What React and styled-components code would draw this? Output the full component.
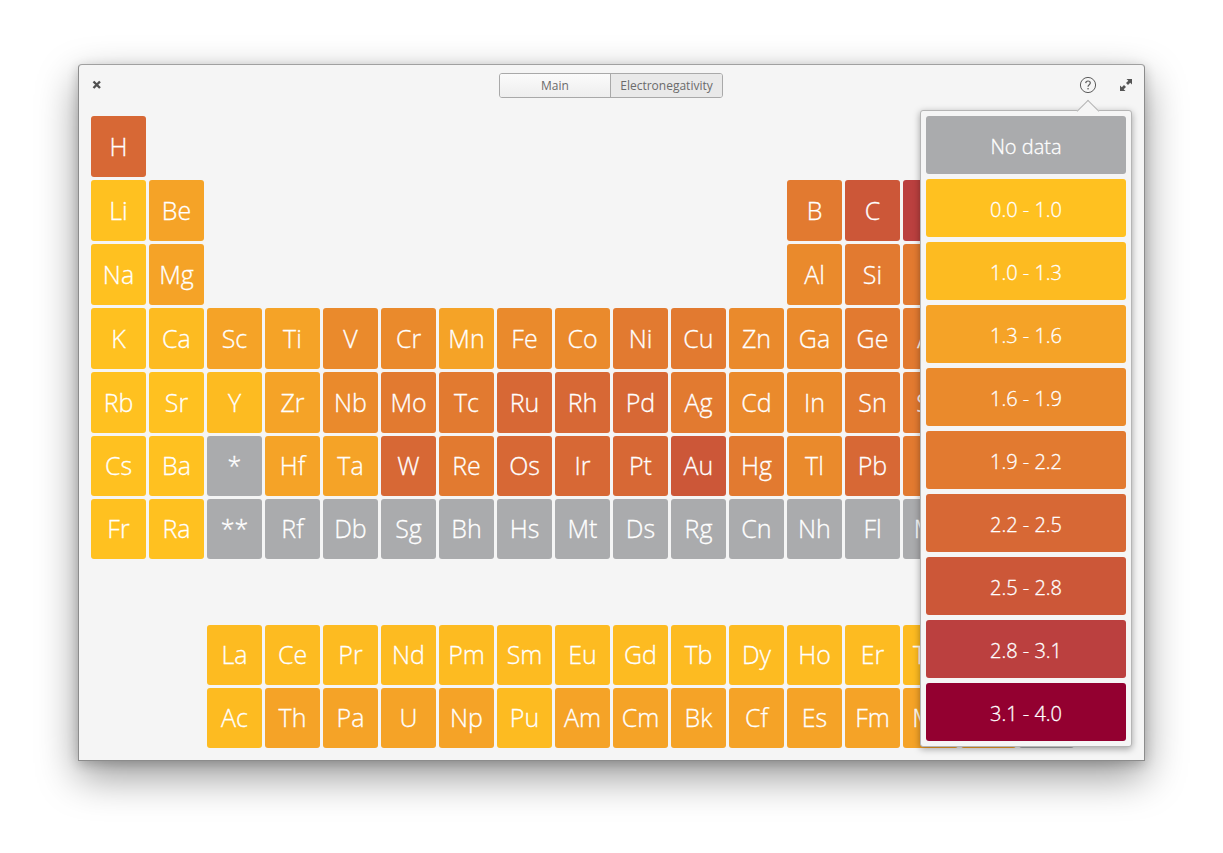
import React from 'react'
import styled, { createGlobalStyle } from 'styled-components'

const BANDS = [
  { label: 'No data', color: '#aaabad' },
  { label: '0.0 - 1.0', color: '#ffc120' },
  { label: '1.0 - 1.3', color: '#fdbb21' },
  { label: '1.3 - 1.6', color: '#f5a327' },
  { label: '1.6 - 1.9', color: '#ea8a2c' },
  { label: '1.9 - 2.2', color: '#e27a30' },
  { label: '2.2 - 2.5', color: '#d76835' },
  { label: '2.5 - 2.8', color: '#cc5738' },
  { label: '2.8 - 3.1', color: '#bb403f' },
  { label: '3.1 - 4.0', color: '#930030' },
]

// [symbol, column, band], row by row; a null row is the empty one
const ROWS = [
  [['H', 1, 6], ['He', 18, 0]],
  [['Li', 1, 1], ['Be', 2, 3], ['B', 13, 5], ['C', 14, 7], ['N', 15, 8], ['O', 16, 9], ['F', 17, 9], ['Ne', 18, 0]],
  [['Na', 1, 1], ['Mg', 2, 3], ['Al', 13, 4], ['Si', 14, 5], ['P', 15, 5], ['S', 16, 7], ['Cl', 17, 9], ['Ar', 18, 0]],
  [['K', 1, 1], ['Ca', 2, 2], ['Sc', 3, 3], ['Ti', 4, 3], ['V', 5, 4], ['Cr', 6, 4], ['Mn', 7, 3], ['Fe', 8, 4], ['Co', 9, 4], ['Ni', 10, 5], ['Cu', 11, 5], ['Zn', 12, 4], ['Ga', 13, 4], ['Ge', 14, 5], ['As', 15, 5], ['Se', 16, 7], ['Br', 17, 8], ['Kr', 18, 8]],
  [['Rb', 1, 1], ['Sr', 2, 1], ['Y', 3, 2], ['Zr', 4, 3], ['Nb', 5, 4], ['Mo', 6, 5], ['Tc', 7, 5], ['Ru', 8, 6], ['Rh', 9, 6], ['Pd', 10, 6], ['Ag', 11, 5], ['Cd', 12, 4], ['In', 13, 4], ['Sn', 14, 5], ['Sb', 15, 5], ['Te', 16, 5], ['I', 17, 7], ['Xe', 18, 7]],
  [['Cs', 1, 1], ['Ba', 2, 1], ['*', 3, 0], ['Hf', 4, 3], ['Ta', 5, 3], ['W', 6, 6], ['Re', 7, 5], ['Os', 8, 6], ['Ir', 9, 6], ['Pt', 10, 6], ['Au', 11, 7], ['Hg', 12, 5], ['Tl', 13, 4], ['Pb', 14, 6], ['Bi', 15, 5], ['Po', 16, 5], ['At', 17, 6], ['Rn', 18, 6]],
  [['Fr', 1, 1], ['Ra', 2, 1], ['**', 3, 0], ['Rf', 4, 0], ['Db', 5, 0], ['Sg', 6, 0], ['Bh', 7, 0], ['Hs', 8, 0], ['Mt', 9, 0], ['Ds', 10, 0], ['Rg', 11, 0], ['Cn', 12, 0], ['Nh', 13, 0], ['Fl', 14, 0], ['Mc', 15, 0], ['Lv', 16, 0], ['Ts', 17, 0], ['Og', 18, 0]],
  null,
  [['La', 3, 2], ['Ce', 4, 2], ['Pr', 5, 2], ['Nd', 6, 2], ['Pm', 7, 2], ['Sm', 8, 2], ['Eu', 9, 2], ['Gd', 10, 2], ['Tb', 11, 2], ['Dy', 12, 2], ['Ho', 13, 2], ['Er', 14, 2], ['Tm', 15, 2], ['Yb', 16, 2], ['Lu', 17, 2]],
  [['Ac', 3, 2], ['Th', 4, 3], ['Pa', 5, 3], ['U', 6, 3], ['Np', 7, 3], ['Pu', 8, 2], ['Am', 9, 3], ['Cm', 10, 3], ['Bk', 11, 3], ['Cf', 12, 3], ['Es', 13, 3], ['Fm', 14, 3], ['Md', 15, 3], ['No', 16, 3], ['Lr', 17, 0]],
]

const GlobalStyle = createGlobalStyle`
  html, body {
    margin: 0;
    background: #fff;
    font-family: "Open Sans", "Noto Sans", sans-serif;
  }
`

const Stage = styled.div`
  width: 1223px;
  height: 853px;
  box-sizing: border-box;
  padding: 64px 0 0 78px;
  overflow: hidden;
`

const Window = styled.div`
  position: relative;
  width: 1067px;
  height: 697px;
  box-sizing: border-box;
  background: #f5f5f5;
  border: 1px solid #8c8c8c;
  border-top-color: #a0a0a0;
  border-radius: 4px 4px 0 0;
  box-shadow: 0 16px 40px rgba(0, 0, 0, 0.4), 0 3px 12px rgba(0, 0, 0, 0.2);
`

const TitleBar = styled.div`
  height: 51px;
  box-sizing: border-box;
  padding: 8px 12px 0;
  display: grid;
  grid-template-columns: 1fr auto 1fr;
  align-items: start;
`

const IconButton = styled.div`
  height: 24px;
  display: flex;
  align-items: center;
  justify-content: center;
  color: #555;
`

const CloseButton = styled(IconButton)`
  justify-self: start;
`

const Actions = styled.div`
  justify-self: end;
  display: flex;
  align-items: center;
  gap: 23px;
`

const Segments = styled.div`
  display: flex;
  width: 224px;
  height: 25px;
  box-sizing: border-box;
  border: 1px solid #a9a9a9;
  border-radius: 3px;
  margin-left: -1px;
  overflow: hidden;
`

const Segment = styled.div`
  flex: ${p => (p.$active ? '1' : '0 0 110px')};
  display: flex;
  align-items: center;
  justify-content: center;
  font-size: 12px;
  color: #6b6b6b;
  background: ${p => (p.$active ? '#e9e9e9' : 'linear-gradient(#fbfbfb, #eeeeee)')};
  border-left: ${p => (p.$active ? '1px solid #a9a9a9' : 'none')};
`

const Table = styled.div`
  display: grid;
  grid-template-columns: repeat(18, 55px);
  grid-template-rows: repeat(5, 61px) repeat(5, 60px);
  gap: 3px;
  padding-left: 12px;
`

const Row = styled.div`
  display: contents;
`

const Cell = styled.div`
  grid-column: ${p => p.$col};
  grid-row: ${p => p.$row};
  display: flex;
  align-items: center;
  justify-content: center;
  padding-bottom: 2px;
  box-sizing: border-box;
  border-radius: 3px;
  background: ${p => p.$color};
  color: #fff;
  font-size: 25px;
  font-weight: 300;
  -webkit-text-stroke: 0.3px #fff;
`

const Popover = styled.div`
  position: absolute;
  top: 45px;
  left: 841px;
  width: 212px;
  height: 637px;
  box-sizing: border-box;
  padding: 5px;
  display: flex;
  flex-direction: column;
  gap: 5px;
  background: #f5f5f5;
  border: 1px solid #b5b5b5;
  border-radius: 3px;
  box-shadow: 0 2px 7px rgba(0, 0, 0, 0.35);
`

const Arrow = styled.div`
  position: absolute;
  top: -8px;
  left: 159px;
  width: 15px;
  height: 15px;
  background: #f5f5f5;
  border-top: 1px solid #b5b5b5;
  border-left: 1px solid #b5b5b5;
  transform: rotate(45deg);
`

const Band = styled.div`
  position: relative;
  flex: 1;
  display: flex;
  align-items: center;
  justify-content: center;
  padding-top: 2px;
  border-radius: 3px;
  background: ${p => p.$color};
  color: #fff;
  font-size: 20px;
  font-weight: 300;
  -webkit-text-stroke: 0.3px #fff;
`

function CloseIcon() {
  return (
    <svg width="12" height="12" viewBox="0 0 12 12">
      <path d="M2.5 2.5 L9 9 M9 2.5 L2.5 9" stroke="#505050" strokeWidth="2.4" strokeLinecap="butt" fill="none" />
    </svg>
  )
}

function HelpIcon() {
  return (
    <svg width="18" height="18" viewBox="0 0 18 18">
      <circle cx="9" cy="9" r="7.6" stroke="#5c5c5c" strokeWidth="1" fill="none" />
      <path d="M6.7 7.1 C6.8 5.7 7.8 5 9 5 C10.3 5 11.3 5.8 11.3 7 C11.3 8.7 9 8.7 9 10.8" stroke="#5c5c5c" strokeWidth="1.2" fill="none" />
      <rect x="8.4" y="12" width="1.3" height="1.4" fill="#5c5c5c" />
    </svg>
  )
}

function ExpandIcon() {
  return (
    <svg width="12" height="12" viewBox="0 0 12 12">
      <path d="M6.5 0 H12 V5.5 L10.2 3.7 L8 6 L6 4 L8.3 1.8 Z M5.5 12 H0 V6.5 L1.8 8.3 L4 6 L6 8 L3.7 10.2 Z" fill="#555" />
    </svg>
  )
}

function App() {
  return (
    <Stage>
      <GlobalStyle />
      <Window>
        <TitleBar>
          <CloseButton>
            <CloseIcon />
          </CloseButton>
          <Segments>
            <Segment>Main</Segment>
            <Segment $active>Electronegativity</Segment>
          </Segments>
          <Actions>
            <IconButton>
              <HelpIcon />
            </IconButton>
            <IconButton>
              <ExpandIcon />
            </IconButton>
          </Actions>
        </TitleBar>

        <Table>
          {ROWS.map((cells, i) =>
            cells ? (
              <Row key={i}>
                {cells.map(([symbol, col, band]) => (
                  <Cell key={symbol} $col={col} $row={i + 1} $color={BANDS[band].color}>
                    {symbol}
                  </Cell>
                ))}
              </Row>
            ) : null
          )}
        </Table>

        <Popover>
          <Arrow />
          {BANDS.map(band => (
            <Band key={band.label} $color={band.color}>
              {band.label}
            </Band>
          ))}
        </Popover>
      </Window>
    </Stage>
  )
}

export default App
